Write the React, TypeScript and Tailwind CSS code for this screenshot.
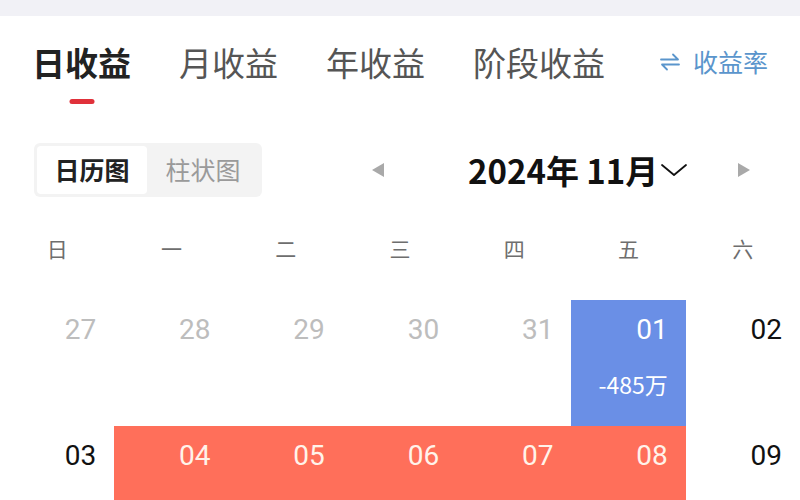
const font = "font-['Noto_Sans_CJK_SC','Noto_Sans',sans-serif]";

type Cell = { day: string; kind: "prev" | "normal" | "loss" | "gain"; amount?: string };

const weekdays = ["日", "一", "二", "三", "四", "五", "六"];

const rows: Cell[][] = [
  [
    { day: "27", kind: "prev" },
    { day: "28", kind: "prev" },
    { day: "29", kind: "prev" },
    { day: "30", kind: "prev" },
    { day: "31", kind: "prev" },
    { day: "01", kind: "loss", amount: "-485万" },
    { day: "02", kind: "normal" },
  ],
  [
    { day: "03", kind: "normal" },
    { day: "04", kind: "gain", amount: "+312万" },
    { day: "05", kind: "gain", amount: "+208万" },
    { day: "06", kind: "gain", amount: "+156万" },
    { day: "07", kind: "gain", amount: "+97万" },
    { day: "08", kind: "gain", amount: "+264万" },
    { day: "09", kind: "normal" },
  ],
];

function DayCell({ cell }: { cell: Cell }) {
  const bg =
    cell.kind === "loss" ? "bg-[#6a8fe6]" : cell.kind === "gain" ? "bg-[#ff6f5a]" : "bg-white";
  const color =
    cell.kind === "prev"
      ? "text-[#bdbdbd]"
      : cell.kind === "normal"
        ? "text-[#111]"
        : cell.kind === "loss"
          ? "text-white"
          : "text-[#fff3ea]";
  return (
    <div className={`flex h-[126px] flex-col items-end pr-[18px] pt-[12px] ${bg}`}>
      <span className={`font-['Roboto',sans-serif] text-[28px] leading-[36px] ${color}`}>{cell.day}</span>
      {cell.amount && (
        <span className={`mt-[22px] ${font} text-[23px] leading-[28px] ${color}`}>{cell.amount}</span>
      )}
    </div>
  );
}

export default function App() {
  return (
    <div className={`h-[500px] w-[800px] overflow-hidden bg-white ${font}`}>
      <div className="h-4 bg-[#f1f1f6]" />

      {/* tabs */}
      <div className="flex h-[92px] items-center pl-[32px] pr-[32px]">
        <div className="flex items-center gap-[48px] text-[33px] leading-[44px]">
          <span className="relative font-bold text-[#222]">
            日收益
            <span className="absolute -bottom-[20px] left-1/2 h-[5px] w-[25px] -translate-x-1/2 rounded-full bg-[#e0313a]" />
          </span>
          <span className="text-[#555]">月收益</span>
          <span className="text-[#555]">年收益</span>
          <span className="text-[#555]">阶段收益</span>
        </div>
        <div className="ml-auto flex items-center gap-[12px] text-[25px] text-[#5a95cc]">
          <svg width="22" height="20" viewBox="0 0 22 20" fill="none" stroke="currentColor" strokeWidth="1.8" strokeLinecap="round" strokeLinejoin="round" aria-hidden>
            <path d="M2 7.5h17l-5-5" />
            <path d="M20 12.5H3l5 5" />
          </svg>
          <span>收益率</span>
        </div>
      </div>

      {/* view switch + month */}
      <div className="mt-[35px] flex items-center">
        <div className="ml-[34px] flex h-[54px] w-[228px] items-center rounded-md bg-[#f3f3f3] p-[3px] text-[25px]">
          <div className="flex h-full w-[110px] items-center justify-center rounded bg-white font-bold text-[#222]">日历图</div>
          <div className="flex h-full flex-1 items-center justify-center text-[#9a9a9a]">柱状图</div>
        </div>
        <span className="ml-[110px] h-0 w-0 border-y-[7px] border-r-[12px] border-y-transparent border-r-[#a9a9a9]" />
        <div className="ml-[84px] flex items-center">
          <span className="text-[33px] font-bold leading-[40px] text-[#111]">2024年 11月</span>
          <svg width="30" height="20" viewBox="0 0 30 20" fill="none" stroke="#111" strokeWidth="1.8" strokeLinecap="round" strokeLinejoin="round" aria-hidden>
            <path d="M4 5l12 10 12-10" />
          </svg>
        </div>
        <span className="ml-[50px] h-0 w-0 border-y-[7px] border-l-[12px] border-y-transparent border-l-[#a9a9a9]" />
      </div>

      {/* weekdays */}
      <div className="grid h-[103px] grid-cols-7 items-center">
        {weekdays.map((w) => (
          <span key={w} className="text-center text-[21px] text-[#6e6e6e]">
            {w}
          </span>
        ))}
      </div>

      {/* days */}
      <div className="grid grid-cols-7">
        {rows.flat().map((c) => (
          <DayCell key={c.day} cell={c} />
        ))}
      </div>
    </div>
  );
}
